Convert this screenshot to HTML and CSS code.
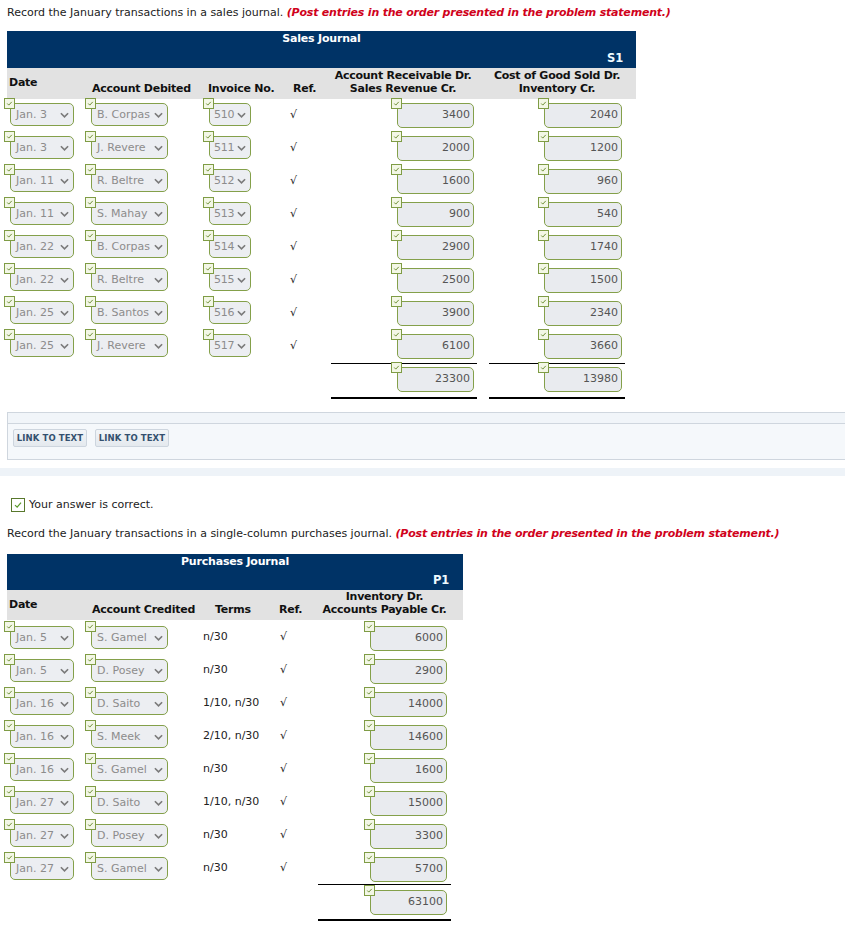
FILE: index.html
```html
<!DOCTYPE html>
<html>
<head>
<meta charset="utf-8">
<link rel="stylesheet" href="styles.css">
</head>
<body>
<div class="page">
  <p class="instr first">Record the January transactions in a sales journal. <span class="note">(Post entries in the order presented in the problem statement.)</span></p>

  <div class="journal sales">
    <div class="jhead"><div class="jtitle">Sales Journal</div><div class="jcode">S1</div></div>
    <div class="row hrow">
      <div class="h hdate">Date</div>
      <div class="h hacct">Account Debited</div>
      <div class="h hinv">Invoice No.</div>
      <div class="h href">Ref.</div>
      <div class="h hamt">Account Receivable Dr.<br>Sales Revenue Cr.</div>
      <div class="h hamt hamt2">Cost of Good Sold Dr.<br>Inventory Cr.</div>
    </div>

    <div class="row drow">
      <div class="c"><span class="sel s-date"><i class="ck"><svg viewBox="0 0 10 10"><path d="M2.5 5 L4.2 6.8 L7.5 3.2"/></svg></i>Jan. 3<svg class="chev" viewBox="0 0 10 6"><polyline points="1,1 5,5 9,1"/></svg></span></div>
      <div class="c"><span class="sel s-acct"><i class="ck"><svg viewBox="0 0 10 10"><path d="M2.5 5 L4.2 6.8 L7.5 3.2"/></svg></i>B. Corpas<svg class="chev" viewBox="0 0 10 6"><polyline points="1,1 5,5 9,1"/></svg></span></div>
      <div class="c"><span class="sel s-inv"><i class="ck"><svg viewBox="0 0 10 10"><path d="M2.5 5 L4.2 6.8 L7.5 3.2"/></svg></i>510<svg class="chev" viewBox="0 0 10 6"><polyline points="1,1 5,5 9,1"/></svg></span></div>
      <div class="c ref">√</div>
      <div class="c"><span class="amt a1"><i class="ck"><svg viewBox="0 0 10 10"><path d="M2.5 5 L4.2 6.8 L7.5 3.2"/></svg></i>3400</span></div>
      <div class="c"><span class="amt a2"><i class="ck"><svg viewBox="0 0 10 10"><path d="M2.5 5 L4.2 6.8 L7.5 3.2"/></svg></i>2040</span></div>
    </div>
    <div class="row drow">
      <div class="c"><span class="sel s-date"><i class="ck"><svg viewBox="0 0 10 10"><path d="M2.5 5 L4.2 6.8 L7.5 3.2"/></svg></i>Jan. 3<svg class="chev" viewBox="0 0 10 6"><polyline points="1,1 5,5 9,1"/></svg></span></div>
      <div class="c"><span class="sel s-acct"><i class="ck"><svg viewBox="0 0 10 10"><path d="M2.5 5 L4.2 6.8 L7.5 3.2"/></svg></i>J. Revere<svg class="chev" viewBox="0 0 10 6"><polyline points="1,1 5,5 9,1"/></svg></span></div>
      <div class="c"><span class="sel s-inv"><i class="ck"><svg viewBox="0 0 10 10"><path d="M2.5 5 L4.2 6.8 L7.5 3.2"/></svg></i>511<svg class="chev" viewBox="0 0 10 6"><polyline points="1,1 5,5 9,1"/></svg></span></div>
      <div class="c ref">√</div>
      <div class="c"><span class="amt a1"><i class="ck"><svg viewBox="0 0 10 10"><path d="M2.5 5 L4.2 6.8 L7.5 3.2"/></svg></i>2000</span></div>
      <div class="c"><span class="amt a2"><i class="ck"><svg viewBox="0 0 10 10"><path d="M2.5 5 L4.2 6.8 L7.5 3.2"/></svg></i>1200</span></div>
    </div>
    <div class="row drow">
      <div class="c"><span class="sel s-date"><i class="ck"><svg viewBox="0 0 10 10"><path d="M2.5 5 L4.2 6.8 L7.5 3.2"/></svg></i>Jan. 11<svg class="chev" viewBox="0 0 10 6"><polyline points="1,1 5,5 9,1"/></svg></span></div>
      <div class="c"><span class="sel s-acct"><i class="ck"><svg viewBox="0 0 10 10"><path d="M2.5 5 L4.2 6.8 L7.5 3.2"/></svg></i>R. Beltre<svg class="chev" viewBox="0 0 10 6"><polyline points="1,1 5,5 9,1"/></svg></span></div>
      <div class="c"><span class="sel s-inv"><i class="ck"><svg viewBox="0 0 10 10"><path d="M2.5 5 L4.2 6.8 L7.5 3.2"/></svg></i>512<svg class="chev" viewBox="0 0 10 6"><polyline points="1,1 5,5 9,1"/></svg></span></div>
      <div class="c ref">√</div>
      <div class="c"><span class="amt a1"><i class="ck"><svg viewBox="0 0 10 10"><path d="M2.5 5 L4.2 6.8 L7.5 3.2"/></svg></i>1600</span></div>
      <div class="c"><span class="amt a2"><i class="ck"><svg viewBox="0 0 10 10"><path d="M2.5 5 L4.2 6.8 L7.5 3.2"/></svg></i>960</span></div>
    </div>
    <div class="row drow">
      <div class="c"><span class="sel s-date"><i class="ck"><svg viewBox="0 0 10 10"><path d="M2.5 5 L4.2 6.8 L7.5 3.2"/></svg></i>Jan. 11<svg class="chev" viewBox="0 0 10 6"><polyline points="1,1 5,5 9,1"/></svg></span></div>
      <div class="c"><span class="sel s-acct"><i class="ck"><svg viewBox="0 0 10 10"><path d="M2.5 5 L4.2 6.8 L7.5 3.2"/></svg></i>S. Mahay<svg class="chev" viewBox="0 0 10 6"><polyline points="1,1 5,5 9,1"/></svg></span></div>
      <div class="c"><span class="sel s-inv"><i class="ck"><svg viewBox="0 0 10 10"><path d="M2.5 5 L4.2 6.8 L7.5 3.2"/></svg></i>513<svg class="chev" viewBox="0 0 10 6"><polyline points="1,1 5,5 9,1"/></svg></span></div>
      <div class="c ref">√</div>
      <div class="c"><span class="amt a1"><i class="ck"><svg viewBox="0 0 10 10"><path d="M2.5 5 L4.2 6.8 L7.5 3.2"/></svg></i>900</span></div>
      <div class="c"><span class="amt a2"><i class="ck"><svg viewBox="0 0 10 10"><path d="M2.5 5 L4.2 6.8 L7.5 3.2"/></svg></i>540</span></div>
    </div>
    <div class="row drow">
      <div class="c"><span class="sel s-date"><i class="ck"><svg viewBox="0 0 10 10"><path d="M2.5 5 L4.2 6.8 L7.5 3.2"/></svg></i>Jan. 22<svg class="chev" viewBox="0 0 10 6"><polyline points="1,1 5,5 9,1"/></svg></span></div>
      <div class="c"><span class="sel s-acct"><i class="ck"><svg viewBox="0 0 10 10"><path d="M2.5 5 L4.2 6.8 L7.5 3.2"/></svg></i>B. Corpas<svg class="chev" viewBox="0 0 10 6"><polyline points="1,1 5,5 9,1"/></svg></span></div>
      <div class="c"><span class="sel s-inv"><i class="ck"><svg viewBox="0 0 10 10"><path d="M2.5 5 L4.2 6.8 L7.5 3.2"/></svg></i>514<svg class="chev" viewBox="0 0 10 6"><polyline points="1,1 5,5 9,1"/></svg></span></div>
      <div class="c ref">√</div>
      <div class="c"><span class="amt a1"><i class="ck"><svg viewBox="0 0 10 10"><path d="M2.5 5 L4.2 6.8 L7.5 3.2"/></svg></i>2900</span></div>
      <div class="c"><span class="amt a2"><i class="ck"><svg viewBox="0 0 10 10"><path d="M2.5 5 L4.2 6.8 L7.5 3.2"/></svg></i>1740</span></div>
    </div>
    <div class="row drow">
      <div class="c"><span class="sel s-date"><i class="ck"><svg viewBox="0 0 10 10"><path d="M2.5 5 L4.2 6.8 L7.5 3.2"/></svg></i>Jan. 22<svg class="chev" viewBox="0 0 10 6"><polyline points="1,1 5,5 9,1"/></svg></span></div>
      <div class="c"><span class="sel s-acct"><i class="ck"><svg viewBox="0 0 10 10"><path d="M2.5 5 L4.2 6.8 L7.5 3.2"/></svg></i>R. Beltre<svg class="chev" viewBox="0 0 10 6"><polyline points="1,1 5,5 9,1"/></svg></span></div>
      <div class="c"><span class="sel s-inv"><i class="ck"><svg viewBox="0 0 10 10"><path d="M2.5 5 L4.2 6.8 L7.5 3.2"/></svg></i>515<svg class="chev" viewBox="0 0 10 6"><polyline points="1,1 5,5 9,1"/></svg></span></div>
      <div class="c ref">√</div>
      <div class="c"><span class="amt a1"><i class="ck"><svg viewBox="0 0 10 10"><path d="M2.5 5 L4.2 6.8 L7.5 3.2"/></svg></i>2500</span></div>
      <div class="c"><span class="amt a2"><i class="ck"><svg viewBox="0 0 10 10"><path d="M2.5 5 L4.2 6.8 L7.5 3.2"/></svg></i>1500</span></div>
    </div>
    <div class="row drow">
      <div class="c"><span class="sel s-date"><i class="ck"><svg viewBox="0 0 10 10"><path d="M2.5 5 L4.2 6.8 L7.5 3.2"/></svg></i>Jan. 25<svg class="chev" viewBox="0 0 10 6"><polyline points="1,1 5,5 9,1"/></svg></span></div>
      <div class="c"><span class="sel s-acct"><i class="ck"><svg viewBox="0 0 10 10"><path d="M2.5 5 L4.2 6.8 L7.5 3.2"/></svg></i>B. Santos<svg class="chev" viewBox="0 0 10 6"><polyline points="1,1 5,5 9,1"/></svg></span></div>
      <div class="c"><span class="sel s-inv"><i class="ck"><svg viewBox="0 0 10 10"><path d="M2.5 5 L4.2 6.8 L7.5 3.2"/></svg></i>516<svg class="chev" viewBox="0 0 10 6"><polyline points="1,1 5,5 9,1"/></svg></span></div>
      <div class="c ref">√</div>
      <div class="c"><span class="amt a1"><i class="ck"><svg viewBox="0 0 10 10"><path d="M2.5 5 L4.2 6.8 L7.5 3.2"/></svg></i>3900</span></div>
      <div class="c"><span class="amt a2"><i class="ck"><svg viewBox="0 0 10 10"><path d="M2.5 5 L4.2 6.8 L7.5 3.2"/></svg></i>2340</span></div>
    </div>
    <div class="row drow">
      <div class="c"><span class="sel s-date"><i class="ck"><svg viewBox="0 0 10 10"><path d="M2.5 5 L4.2 6.8 L7.5 3.2"/></svg></i>Jan. 25<svg class="chev" viewBox="0 0 10 6"><polyline points="1,1 5,5 9,1"/></svg></span></div>
      <div class="c"><span class="sel s-acct"><i class="ck"><svg viewBox="0 0 10 10"><path d="M2.5 5 L4.2 6.8 L7.5 3.2"/></svg></i>J. Revere<svg class="chev" viewBox="0 0 10 6"><polyline points="1,1 5,5 9,1"/></svg></span></div>
      <div class="c"><span class="sel s-inv"><i class="ck"><svg viewBox="0 0 10 10"><path d="M2.5 5 L4.2 6.8 L7.5 3.2"/></svg></i>517<svg class="chev" viewBox="0 0 10 6"><polyline points="1,1 5,5 9,1"/></svg></span></div>
      <div class="c ref">√</div>
      <div class="c"><span class="amt a1"><i class="ck"><svg viewBox="0 0 10 10"><path d="M2.5 5 L4.2 6.8 L7.5 3.2"/></svg></i>6100</span></div>
      <div class="c"><span class="amt a2"><i class="ck"><svg viewBox="0 0 10 10"><path d="M2.5 5 L4.2 6.8 L7.5 3.2"/></svg></i>3660</span></div>
    </div>
    <div class="row trow">
      <div></div><div></div><div></div><div></div>
      <div class="tcell t1"><span class="amt"><i class="ck"><svg viewBox="0 0 10 10"><path d="M2.5 5 L4.2 6.8 L7.5 3.2"/></svg></i>23300</span></div>
      <div class="tcell t2"><span class="amt"><i class="ck"><svg viewBox="0 0 10 10"><path d="M2.5 5 L4.2 6.8 L7.5 3.2"/></svg></i>13980</span></div>
    </div>
  </div>

  <div class="linkbox">
    <div class="linkstrip"></div>
    <div class="linkbody">
      <span class="lbtn">LINK TO TEXT</span>
      <span class="lbtn">LINK TO TEXT</span>
    </div>
  </div>
  <div class="band"></div>

  <div class="correct"><span class="bigck"><svg viewBox="0 0 14 14"><path d="M3.5 7.2 L6 9.6 L10.5 4.2"/></svg></span>Your answer is correct.</div>

  <p class="instr second">Record the January transactions in a single-column purchases journal. <span class="note">(Post entries in the order presented in the problem statement.)</span></p>

  <div class="journal purch">
    <div class="jhead"><div class="jtitle">Purchases Journal</div><div class="jcode">P1</div></div>
    <div class="row hrow">
      <div class="h hdate">Date</div>
      <div class="h hacct">Account Credited</div>
      <div class="h hterms">Terms</div>
      <div class="h href">Ref.</div>
      <div class="h hamt">Inventory Dr.<br>Accounts Payable Cr.</div>
    </div>

    <div class="row drow">
      <div class="c"><span class="sel s-date"><i class="ck"><svg viewBox="0 0 10 10"><path d="M2.5 5 L4.2 6.8 L7.5 3.2"/></svg></i>Jan. 5<svg class="chev" viewBox="0 0 10 6"><polyline points="1,1 5,5 9,1"/></svg></span></div>
      <div class="c"><span class="sel s-acct"><i class="ck"><svg viewBox="0 0 10 10"><path d="M2.5 5 L4.2 6.8 L7.5 3.2"/></svg></i>S. Gamel<svg class="chev" viewBox="0 0 10 6"><polyline points="1,1 5,5 9,1"/></svg></span></div>
      <div class="c terms">n/30</div>
      <div class="c ref">√</div>
      <div class="c"><span class="amt a1"><i class="ck"><svg viewBox="0 0 10 10"><path d="M2.5 5 L4.2 6.8 L7.5 3.2"/></svg></i>6000</span></div>
    </div>
    <div class="row drow">
      <div class="c"><span class="sel s-date"><i class="ck"><svg viewBox="0 0 10 10"><path d="M2.5 5 L4.2 6.8 L7.5 3.2"/></svg></i>Jan. 5<svg class="chev" viewBox="0 0 10 6"><polyline points="1,1 5,5 9,1"/></svg></span></div>
      <div class="c"><span class="sel s-acct"><i class="ck"><svg viewBox="0 0 10 10"><path d="M2.5 5 L4.2 6.8 L7.5 3.2"/></svg></i>D. Posey<svg class="chev" viewBox="0 0 10 6"><polyline points="1,1 5,5 9,1"/></svg></span></div>
      <div class="c terms">n/30</div>
      <div class="c ref">√</div>
      <div class="c"><span class="amt a1"><i class="ck"><svg viewBox="0 0 10 10"><path d="M2.5 5 L4.2 6.8 L7.5 3.2"/></svg></i>2900</span></div>
    </div>
    <div class="row drow">
      <div class="c"><span class="sel s-date"><i class="ck"><svg viewBox="0 0 10 10"><path d="M2.5 5 L4.2 6.8 L7.5 3.2"/></svg></i>Jan. 16<svg class="chev" viewBox="0 0 10 6"><polyline points="1,1 5,5 9,1"/></svg></span></div>
      <div class="c"><span class="sel s-acct"><i class="ck"><svg viewBox="0 0 10 10"><path d="M2.5 5 L4.2 6.8 L7.5 3.2"/></svg></i>D. Saito<svg class="chev" viewBox="0 0 10 6"><polyline points="1,1 5,5 9,1"/></svg></span></div>
      <div class="c terms">1/10, n/30</div>
      <div class="c ref">√</div>
      <div class="c"><span class="amt a1"><i class="ck"><svg viewBox="0 0 10 10"><path d="M2.5 5 L4.2 6.8 L7.5 3.2"/></svg></i>14000</span></div>
    </div>
    <div class="row drow">
      <div class="c"><span class="sel s-date"><i class="ck"><svg viewBox="0 0 10 10"><path d="M2.5 5 L4.2 6.8 L7.5 3.2"/></svg></i>Jan. 16<svg class="chev" viewBox="0 0 10 6"><polyline points="1,1 5,5 9,1"/></svg></span></div>
      <div class="c"><span class="sel s-acct"><i class="ck"><svg viewBox="0 0 10 10"><path d="M2.5 5 L4.2 6.8 L7.5 3.2"/></svg></i>S. Meek<svg class="chev" viewBox="0 0 10 6"><polyline points="1,1 5,5 9,1"/></svg></span></div>
      <div class="c terms">2/10, n/30</div>
      <div class="c ref">√</div>
      <div class="c"><span class="amt a1"><i class="ck"><svg viewBox="0 0 10 10"><path d="M2.5 5 L4.2 6.8 L7.5 3.2"/></svg></i>14600</span></div>
    </div>
    <div class="row drow">
      <div class="c"><span class="sel s-date"><i class="ck"><svg viewBox="0 0 10 10"><path d="M2.5 5 L4.2 6.8 L7.5 3.2"/></svg></i>Jan. 16<svg class="chev" viewBox="0 0 10 6"><polyline points="1,1 5,5 9,1"/></svg></span></div>
      <div class="c"><span class="sel s-acct"><i class="ck"><svg viewBox="0 0 10 10"><path d="M2.5 5 L4.2 6.8 L7.5 3.2"/></svg></i>S. Gamel<svg class="chev" viewBox="0 0 10 6"><polyline points="1,1 5,5 9,1"/></svg></span></div>
      <div class="c terms">n/30</div>
      <div class="c ref">√</div>
      <div class="c"><span class="amt a1"><i class="ck"><svg viewBox="0 0 10 10"><path d="M2.5 5 L4.2 6.8 L7.5 3.2"/></svg></i>1600</span></div>
    </div>
    <div class="row drow">
      <div class="c"><span class="sel s-date"><i class="ck"><svg viewBox="0 0 10 10"><path d="M2.5 5 L4.2 6.8 L7.5 3.2"/></svg></i>Jan. 27<svg class="chev" viewBox="0 0 10 6"><polyline points="1,1 5,5 9,1"/></svg></span></div>
      <div class="c"><span class="sel s-acct"><i class="ck"><svg viewBox="0 0 10 10"><path d="M2.5 5 L4.2 6.8 L7.5 3.2"/></svg></i>D. Saito<svg class="chev" viewBox="0 0 10 6"><polyline points="1,1 5,5 9,1"/></svg></span></div>
      <div class="c terms">1/10, n/30</div>
      <div class="c ref">√</div>
      <div class="c"><span class="amt a1"><i class="ck"><svg viewBox="0 0 10 10"><path d="M2.5 5 L4.2 6.8 L7.5 3.2"/></svg></i>15000</span></div>
    </div>
    <div class="row drow">
      <div class="c"><span class="sel s-date"><i class="ck"><svg viewBox="0 0 10 10"><path d="M2.5 5 L4.2 6.8 L7.5 3.2"/></svg></i>Jan. 27<svg class="chev" viewBox="0 0 10 6"><polyline points="1,1 5,5 9,1"/></svg></span></div>
      <div class="c"><span class="sel s-acct"><i class="ck"><svg viewBox="0 0 10 10"><path d="M2.5 5 L4.2 6.8 L7.5 3.2"/></svg></i>D. Posey<svg class="chev" viewBox="0 0 10 6"><polyline points="1,1 5,5 9,1"/></svg></span></div>
      <div class="c terms">n/30</div>
      <div class="c ref">√</div>
      <div class="c"><span class="amt a1"><i class="ck"><svg viewBox="0 0 10 10"><path d="M2.5 5 L4.2 6.8 L7.5 3.2"/></svg></i>3300</span></div>
    </div>
    <div class="row drow">
      <div class="c"><span class="sel s-date"><i class="ck"><svg viewBox="0 0 10 10"><path d="M2.5 5 L4.2 6.8 L7.5 3.2"/></svg></i>Jan. 27<svg class="chev" viewBox="0 0 10 6"><polyline points="1,1 5,5 9,1"/></svg></span></div>
      <div class="c"><span class="sel s-acct"><i class="ck"><svg viewBox="0 0 10 10"><path d="M2.5 5 L4.2 6.8 L7.5 3.2"/></svg></i>S. Gamel<svg class="chev" viewBox="0 0 10 6"><polyline points="1,1 5,5 9,1"/></svg></span></div>
      <div class="c terms">n/30</div>
      <div class="c ref">√</div>
      <div class="c"><span class="amt a1"><i class="ck"><svg viewBox="0 0 10 10"><path d="M2.5 5 L4.2 6.8 L7.5 3.2"/></svg></i>5700</span></div>
    </div>
    <div class="row trow">
      <div></div><div></div><div></div><div></div>
      <div class="tcell t1"><span class="amt"><i class="ck"><svg viewBox="0 0 10 10"><path d="M2.5 5 L4.2 6.8 L7.5 3.2"/></svg></i>63100</span></div>
    </div>
  </div>
</div>
</body>
</html>
```

FILE: styles.css
```css
html, body {
  margin: 0;
  padding: 0;
  background: #ffffff;
  overflow-x: hidden;
}
body {
  font-family: "DejaVu Sans", Verdana, sans-serif;
  font-size: 11px;
  color: #222;
}
.page {
  padding: 0 0 0 7px;
}
.instr {
  margin: 0;
  line-height: 16px;
  color: #222;
}
.instr.first {
  padding-top: 5px;
  margin-bottom: 10px;
}
.instr.second {
  margin-bottom: 12px;
}
.note {
  color: #d0021b;
  font-weight: bold;
  font-style: italic;
  letter-spacing: -0.2px;
}

/* journal */
.journal .jhead {
  background: #003366;
  color: #fff;
  font-weight: bold;
  position: relative;
  letter-spacing: -0.2px;
}
.sales .jhead { width: 629px; height: 37px; }
.purch .jhead { width: 456px; height: 36px; }
.jtitle {
  text-align: center;
  line-height: 16px;
  padding-top: 0;
}
.jcode {
  text-align: right;
  padding-right: 13px;
  line-height: 16px;
  padding-top: 3px;
  color: #eefaff;
  font-size: 11.5px;
}
.purch .jcode { padding-right: 14px; padding-top: 2px; }

.row {
  display: grid;
}
.sales .row { grid-template-columns: 77px 121px 83px 34px 162px 152px; width: 629px; }
.purch .row { grid-template-columns: 77px 116px 72px 40px 151px; width: 456px; }

.hrow {
  background: #e2e2e2;
  height: 31px;
}
.purch .hrow { height: 30px; }
.h {
  font-weight: bold;
  line-height: 13px;
  align-self: end;
  padding-bottom: 4px;
  color: #111;
  white-space: nowrap;
  letter-spacing: -0.25px;
}
.hdate {
  align-self: center;
  padding: 0 0 2px 2px;
}
.hacct { padding-left: 8px; }
.hinv { padding-left: 3px; }
.href { padding-left: 5px; }
.purch .href { padding-left: 7px; }
.hterms { padding-left: 15px; }
.hamt { text-align: center; }
.hamt2 { padding-right: 6px; }
.purch .hamt { padding-right: 6px; }

.drow {
  height: 33px;
}
.c {
  padding-top: 4px;
  position: relative;
}
.purch .c { padding-top: 6px; }
.c.ref, .c.terms {
  padding-top: 0;
  line-height: 31px;
  font-size: 11px;
  color: #222;
}
.sales .c.ref { padding-left: 2px; }
.purch .c.ref { padding-left: 8px; line-height: 33px; }
.c.terms { padding-left: 3px; line-height: 33px; }

/* checkbox */
.ck {
  position: absolute;
  left: -7px;
  top: -6px;
  width: 9px;
  height: 9px;
  border: 1px solid #7f9c45;
  background: #f3f7e6;
  display: block;
  z-index: 2;
}
.ck svg {
  display: block;
  width: 9px;
  height: 9px;
}
.ck path {
  fill: none;
  stroke: #6e8f35;
  stroke-width: 1.1;
}

/* select */
.sel {
  position: relative;
  display: flex;
  align-items: center;
  justify-content: space-between;
  box-sizing: border-box;
  height: 23px;
  border: 1.5px solid #84a04a;
  border-radius: 5px;
  background: #eceef2;
  color: #8c8c8c;
  padding: 0 4px 0 5px;
  white-space: nowrap;
}
.s-date { width: 64px; margin-left: 3px; }
.s-acct { width: 77px; margin-left: 7px; }
.s-inv { width: 42px; margin-left: 4px; }
.chev {
  width: 9px;
  height: 6px;
  flex: none;
  margin-left: 3px;
}
.chev polyline {
  fill: none;
  stroke: #7a7a7a;
  stroke-width: 1.8;
}
.s-inv { letter-spacing: -0.3px; padding-left: 4px; }

/* amount */
.amt {
  position: relative;
  display: block;
  box-sizing: border-box;
  width: 77px;
  height: 25px;
  line-height: 22px;
  border: 1.5px solid #84a04a;
  border-radius: 5px;
  background: #e9ebef;
  color: #555;
  text-align: right;
  padding-right: 3px;
}
.sales .a1 { margin-left: 75px; }
.sales .a2 { margin-left: 60px; width: 78px; }
.purch .a1 { margin-left: 58px; }

/* totals */
.tcell {
  border-top: 1px solid #000;
  border-bottom: 2px solid #000;
  padding: 3px 0 5px 0;
}
.sales .tcell.t1 { margin: 0 7px 0 9px; }
.sales .tcell.t1 .amt { margin-left: 66px; }
.sales .tcell.t2 { margin: 0 11px 0 5px; }
.sales .tcell.t2 .amt { margin-left: 55px; width: 78px; }
.purch .tcell.t1 { margin: 0 12px 0 6px; padding-top: 5px; padding-bottom: 4px; }
.purch .tcell.t1 .amt { margin-left: 52px; }

/* link box */
.linkbox {
  margin-top: 13px;
  margin-right: -20px;
  border: 1px solid #cfd6de;
  background: #f5f8fb;
}
.linkstrip {
  height: 10px;
  background: #f1f5f9;
  border-bottom: 1px solid #cfd6de;
}
.linkbody {
  height: 35px;
  padding: 5px 0 0 5px;
  box-sizing: border-box;
  display: flex;
  gap: 8px;
  align-items: flex-start;
}
.lbtn {
  display: block;
  box-sizing: border-box;
  width: 74px;
  height: 18px;
  line-height: 16px;
  text-align: center;
  font-size: 8.5px;
  font-weight: bold;
  color: #34506e;
  background: linear-gradient(#f2f5f8, #e4e9ee);
  border: 1px solid #cdd5de;
  border-radius: 2px;
  letter-spacing: 0.1px;
}
.band {
  margin: 8px 0 0 -7px;
  height: 8px;
  background: #eef3f8;
}

.correct {
  margin-top: 21px;
  margin-bottom: 13px;
  display: flex;
  align-items: center;
  line-height: 16px;
  padding-left: 4px;
  color: #222;
}
.bigck {
  display: block;
  width: 12px;
  height: 12px;
  border: 1px solid #58782c;
  background: #fff;
  margin-right: 4px;
}
.bigck svg {
  display: block;
  width: 12px;
  height: 12px;
}
.bigck path {
  fill: none;
  stroke: #5a9a2a;
  stroke-width: 1.4;
}
```
